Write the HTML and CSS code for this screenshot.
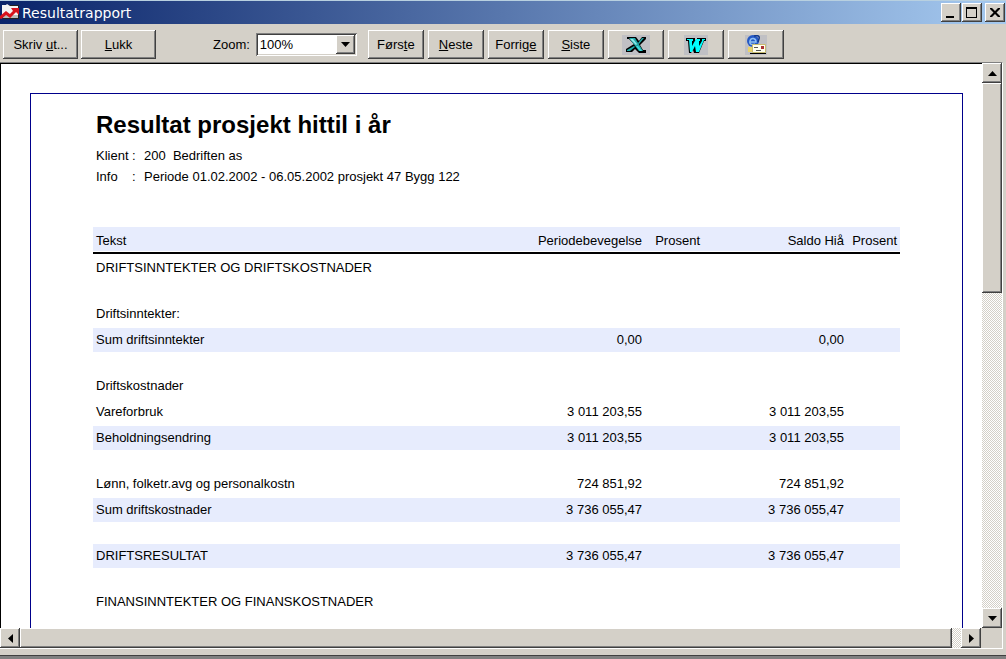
FILE: index.html
```html
<!DOCTYPE html>
<html lang="no">
<head>
<meta charset="utf-8">
<title>Resultatrapport</title>
<link rel="stylesheet" href="styles.css">
</head>
<body>
<div class="window">
  <header class="titlebar">
    <svg class="app-icon" viewBox="0 0 20 17" aria-hidden="true">
      <path fill="#222" d="M3 1h16v14H3z"/>
      <path fill="#f4f4f4" d="M2 1h4l1-1 3 2h8v11H2z"/>
      <path fill="#bbb" d="M3 11h15v3H3z"/>
      <path fill="none" stroke="#d8121c" stroke-width="3" d="M0 14l6-5 4 3 6-6"/>
      <path fill="#d8121c" d="M11 4h8v7l-3-3-3-1z"/>
    </svg>
    <h1 class="caption">Resultatrapport</h1>
    <div class="window-buttons">
      <button class="bevel win" aria-label="Minimer"><svg viewBox="0 0 16 15"><path d="M3 11h8v2H3z"/></svg></button>
      <button class="bevel win" aria-label="Maksimer"><svg viewBox="0 0 16 15"><path fill-rule="evenodd" d="M2 2h11v11H2zM3 4v8h9V4z"/></svg></button>
      <button class="bevel win close" aria-label="Lukk vindu"><svg viewBox="0 0 16 15"><path d="M3 3h2l3 3 3-3h2v1L9.500 7.500 13 11v1h-2L8 9l-3 3H3v-1l3.500-3.500L3 4z"/></svg></button>
    </div>
  </header>

  <div class="toolbar" role="toolbar">
    <div class="group commands">
      <button class="bevel tool wide">Skriv&nbsp;<u>u</u>t...</button>
      <button class="bevel tool wide"><u>L</u>ukk</button>
    </div>
    <div class="zoom">
      <label for="zoom">Zoom:</label>
      <div class="combo">
        <select id="zoom"><option>100%</option><option>75%</option><option>50%</option></select>
        <span class="bevel combo-arrow"><svg viewBox="0 0 9 5"><path d="M0 0h9L4.500 5z"/></svg></span>
      </div>
    </div>
    <div class="group nav">
      <button class="bevel tool">Førs<u>t</u>e</button>
      <button class="bevel tool"><u>N</u>este</button>
      <button class="bevel tool">Forrig<u>e</u></button>
      <button class="bevel tool"><u>S</u>iste</button>
      <button class="bevel tool" aria-label="Excel">
        <svg class="export" viewBox="0 0 28 20"><path fill="#c0c0c4" d="M0 0h28v20H0z"/>
          <path d="M5 2h9l3 4 3-4h4v2l-6 6 3 5h3v3h-7l-4-4-3 3H4v-3l8-5-5-5H5z"/>
          <path fill="#1fa9a9" d="M7 3h6l8 13h-4zM20 3h2l-5 6-1-1z"/>
          <path fill="#8fe8e8" d="M8 4h3l4 5-1 1z"/>
          <path fill="#1fa9a9" d="M5 16v-1l7-4 1 1-5 4z"/><path fill="#3fdede" d="M14 11h2l4 5h-2z"/></svg>
      </button>
      <button class="bevel tool" aria-label="Word">
        <svg class="export" viewBox="0 0 28 20"><path fill="#c0c0c4" d="M2 0h24v20H2z"/>
          <path d="M4 3h9v2h2V3h9v3h-2l-5 12h-5l-1-3-2 3H7L6 6H4z"/>
          <path fill="#0ff" d="M5 4h6v2h-1v5l4-7h4v2h-1v5l3-5V4h3v1h-1l-5 12h-3l-1-6-3 6H8L7 5H5z"/></svg>
      </button>
      <button class="bevel tool" aria-label="E-post">
        <svg class="export" viewBox="0 0 28 20"><path fill="#c0c0c4" d="M3 0h22v20H3z"/>
          <circle cx="11" cy="6" r="6" fill="#2458c4"/>
          <path fill="none" stroke="#8fc0f4" stroke-width="1.500" d="M8 7h6c0-4-5-5-6-1s3 4 5 3"/>
          <path fill="none" stroke="#123a8c" stroke-width="1.500" d="M12 1c4-1 6 0 5 3l-1 3"/>
          <path fill="#e9d36a" d="M6 12h5v5H6z"/>
          <path fill="#fffff0" stroke="#c8bc70" d="M10.500 9.500h13v8h-13z"/>
          <path fill="#a33" d="M19 11h3v3h-3z"/><path fill="#555" d="M12 12h4v1h-4zM14 15h5v1h-5z"/><path d="M8 18h16v1H8z"/></svg>
      </button>
    </div>
  </div>

  <main class="viewer">
    <div class="viewport">
      <article class="page">
        <h2>Resultat prosjekt hittil i år</h2>
        <dl class="meta">
          <dt>Klient</dt><dd>:</dd><dd class="value">200&nbsp; Bedriften as</dd>
          <dt>Info</dt><dd>:</dd><dd class="value">Periode 01.02.2002 - 06.05.2002 prosjekt 47 Bygg 122</dd>
        </dl>
        <table class="report">
          <colgroup><col><col class="amount"><col class="percent"><col class="amount"><col class="last"></colgroup>
          <thead>
            <tr><th>Tekst</th><th>Periodebevegelse</th><th>Prosent</th><th>Saldo Hiå</th><th>Prosent</th></tr>
          </thead>
          <tbody>
            <tr><td colspan="5">DRIFTSINNTEKTER OG DRIFTSKOSTNADER</td></tr>
            <tr class="gap"><td colspan="5">Driftsinntekter:</td></tr>
            <tr class="band"><td>Sum driftsinntekter</td><td>0,00</td><td></td><td>0,00</td><td></td></tr>
            <tr class="gap"><td colspan="5">Driftskostnader</td></tr>
            <tr><td>Vareforbruk</td><td>3 011 203,55</td><td></td><td>3 011 203,55</td><td></td></tr>
            <tr class="band"><td>Beholdningsendring</td><td>3 011 203,55</td><td></td><td>3 011 203,55</td><td></td></tr>
            <tr class="gap"><td>Lønn, folketr.avg og personalkostn</td><td>724 851,92</td><td></td><td>724 851,92</td><td></td></tr>
            <tr class="band"><td>Sum driftskostnader</td><td>3 736 055,47</td><td></td><td>3 736 055,47</td><td></td></tr>
            <tr class="band gap"><td>DRIFTSRESULTAT</td><td>3 736 055,47</td><td></td><td>3 736 055,47</td><td></td></tr>
            <tr class="gap"><td colspan="5">FINANSINNTEKTER OG FINANSKOSTNADER</td></tr>
          </tbody>
        </table>
      </article>
    </div>
    <div class="scroll vertical">
      <button class="bevel arrow" aria-label="Rull opp"><svg viewBox="0 0 9 9"><path d="M0 7h9L4.500 2z"/></svg></button>
      <div class="track"><div class="bevel thumb"></div></div>
      <button class="bevel arrow" aria-label="Rull ned"><svg viewBox="0 0 9 9"><path d="M0 2h9L4.500 7z"/></svg></button>
    </div>
    <div class="scroll horizontal">
      <button class="bevel arrow" aria-label="Rull til venstre"><svg viewBox="0 0 9 9"><path d="M7 0v9L2 4.500z"/></svg></button>
      <div class="track"><div class="bevel thumb"></div></div>
      <button class="bevel arrow" aria-label="Rull til høyre"><svg viewBox="0 0 9 9"><path d="M2 0v9l5-4.500z"/></svg></button>
    </div>
  </main>
  <footer class="frame"></footer>
</div>
</body>
</html>
```
FILE: styles.css
```css
* { box-sizing: border-box; }

body {
  margin: 0;
  background: #d4d0c8;
  color: #000;
  font: 13px/16px "Liberation Sans", Arial, sans-serif;
}

button, select { font: inherit; color: inherit; }
h1, h2, dl, dd { margin: 0; }

.window {
  display: flex;
  flex-direction: column;
  height: 100vh;
  overflow: hidden;
}

.bevel {
  display: flex;
  align-items: center;
  justify-content: center;
  margin: 0;
  padding: 0;
  background: #d4d0c8;
  border: 0;
  border-radius: 0;
  box-shadow: inset -1px -1px #404040, inset 1px 1px #fff, inset -2px -2px #808080;
}

/* Title bar */
.titlebar {
  display: flex;
  align-items: center;
  gap: 2px;
  height: 24px;
  padding-right: 1px;
  border-top: 1px solid #b8d0e0;
  background: linear-gradient(to right, #0a246a, #a6caf0);
}
.app-icon { width: 20px; height: 17px; }
.caption {
  flex: 1;
  color: #fff;
  font: 14px/20px "DejaVu Sans", Tahoma, sans-serif;
}
.window-buttons { display: flex; gap: 1px; }
.win { width: 20px; height: 19px; }
.win svg { width: 16px; height: 15px; }
.close { margin-left: 2px; }

/* Toolbar */
.toolbar {
  display: flex;
  align-items: center;
  height: 38px;
  padding: 3px 3px 0;
}
.group { display: flex; gap: 4px; }
.commands { gap: 3px; }
.tool { width: 56px; height: 29px; }
.wide { width: 75px; }
.export { width: 28px; height: 20px; }
.zoom {
  display: flex;
  align-items: center;
  gap: 6px;
  margin: 0 11px 0 57px;
}
.combo {
  display: grid;
  grid-template-columns: 1fr 19px;
  width: 101px;
  height: 23px;
  padding: 2px;
  background: #fff;
  box-shadow: inset 1px 1px #808080, inset -1px -1px #fff, inset 2px 2px #404040, inset -2px -2px #d4d0c8;
}
.combo select {
  grid-area: 1 / 1 / 2 / 3;
  appearance: none;
  padding: 0 2px;
  border: 0;
  background: transparent;
}
.combo-arrow { grid-area: 1 / 2; pointer-events: none; }
.combo-arrow svg { width: 9px; height: 5px; }

/* Report viewer */
.viewer {
  flex: 1;
  min-height: 0;
  display: grid;
  grid-template: minmax(0, 1fr) 20px / minmax(0, 1fr) 20px;
  margin-right: 3px;
  border-top: 1px solid #808080;
  border-right: 1px solid #fff;
  border-bottom: 1px solid #fff;
}
.viewport {
  overflow: hidden;
  background: #fff;
  border-top: 1px solid #000;
  border-left: 1px solid #000;
  padding: 29px 19px 0 29px;
}
.page {
  min-height: 100%;
  padding: 16px 62px;
  border: 1px solid #00008b;
  border-bottom: 0;
}
.page h2 {
  padding-left: 3px;
  font-size: 24px;
  line-height: 30px;
}
.meta {
  display: grid;
  grid-template-columns: 36px 12px 1fr;
  padding: 5px 3px 0;
  line-height: 21px;
}

.report {
  width: 100%;
  margin-top: 40px;
  border-spacing: 0;
  table-layout: fixed;
}
.amount { width: 144px; }
.percent { width: 58px; }
.last { width: 53px; }
.report th, .report td {
  height: 26px;
  padding: 0 3px;
  border-top: 2px solid #fff;
  font-weight: normal;
  text-align: right;
  white-space: nowrap;
}
.report th:first-child, .report td:first-child { text-align: left; }
.report th {
  height: 27px;
  padding-top: 2px;
  border-top: 0;
  border-bottom: 2px solid #000;
  background: #e7ecfd;
  box-shadow: inset 0 -1px #fff;
}
.band td { background: #e7ecfd; }
.report .gap td { height: 46px; border-top-width: 22px; }

/* Scroll bars */
.scroll { display: flex; }
.vertical { flex-direction: column; }
.horizontal { border-right: 1px solid #d4d0c8; }
.arrow { width: 20px; height: 20px; flex: none; }
.arrow svg { width: 9px; height: 9px; }
.track {
  flex: 1;
  min-width: 0;
  background: repeating-conic-gradient(#d4d0c8 0 25%, #fff 0 50%) 0 0 / 2px 2px;
}
.vertical .thumb { height: 40%; }
.horizontal .thumb { width: 99%; height: 100%; }

.frame {
  height: 10px;
  border-bottom: 3px solid #808080;
  box-shadow: inset 0 -1px #404040;
}
```
